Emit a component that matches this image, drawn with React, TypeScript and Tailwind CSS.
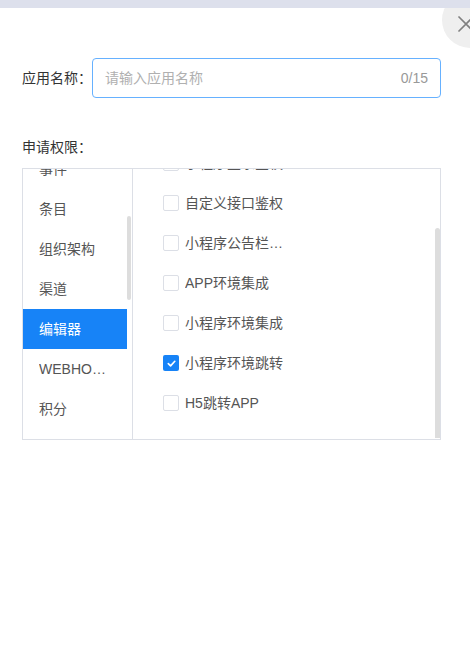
import React from "react";

const leftItems = ["事件", "条目", "组织架构", "渠道", "编辑器", "WEBHOOK", "积分"];
const rightItems: { label: string; checked: boolean }[] = [
  { label: "小程序登录鉴权", checked: false },
  { label: "自定义接口鉴权", checked: false },
  { label: "小程序公告栏配置", checked: false },
  { label: "APP环境集成", checked: false },
  { label: "小程序环境集成", checked: false },
  { label: "小程序环境跳转", checked: true },
  { label: "H5跳转APP", checked: false },
];

function Check({ checked }: { checked: boolean }) {
  if (checked) {
    return (
      <span className="flex h-[16px] w-[16px] shrink-0 items-center justify-center rounded-[2px] bg-[#1783f7]">
        <svg width="11" height="11" viewBox="0 0 12 12" fill="none">
          <path d="M2.5 6.2 L5 8.6 L9.6 3.6" stroke="#fff" strokeWidth="1.8" strokeLinecap="round" strokeLinejoin="round" />
        </svg>
      </span>
    );
  }
  return <span className="h-[16px] w-[16px] shrink-0 rounded-[2px] border border-[#dcdfe6] bg-white" />;
}

export default function App() {
  return (
    <div
      className="relative h-[653px] w-[470px] overflow-hidden bg-white text-[14px]"
      style={{ fontFamily: '"Liberation Sans", "Noto Sans CJK SC", sans-serif' }}
    >
      <div className="absolute left-[442px] top-[-8px] flex h-[56px] w-[56px] items-center justify-center rounded-full bg-[#efefef]">
        <svg className="-ml-[8px] mt-[8px]" width="18" height="18" viewBox="0 0 18 18" fill="none">
          <path d="M2 2 L16 16 M16 2 L2 16" stroke="#808080" strokeWidth="1.7" strokeLinecap="round" />
        </svg>
      </div>
      <div className="relative h-2 bg-[#dde0ec]" />

      <div className="pl-[22px] pr-[29px] pt-[50px]">
        <div className="flex items-center">
          <span className="w-[70px] shrink-0 text-[#333]">应用名称：</span>
          <div className="flex h-10 flex-1 items-center justify-between rounded-[4px] border border-[#66b1ff] px-3">
            <span className="text-[#b0b0b0]">请输入应用名称</span>
            <span className="text-[#999]">0/15</span>
          </div>
        </div>

        <div className="mt-[39px] leading-5 text-[#333]">申请权限：</div>

        <div className="mt-[11px] flex h-[272px] border border-[#dcdfe6]">
          <div className="relative w-[110px] shrink-0 overflow-hidden border-r border-[#dcdfe6]">
            <div className="-mt-[20px] w-[104px]">
              {leftItems.map((it) => (
                <div
                  key={it}
                  className={
                    "flex h-10 items-center pl-4 pr-4 " +
                    (it === "编辑器" ? "bg-[#1783f7] text-white" : "text-[#555]")
                  }
                >
                  <span className="truncate">{it}</span>
                </div>
              ))}
            </div>
            <div className="absolute left-[104px] top-[47px] h-[84px] w-[4px] rounded-full bg-[#dddddd]" />
          </div>

          <div className="relative flex-1 overflow-hidden">
            <div className="-mt-[26px]">
              {rightItems.map((it) => (
                <div key={it.label} className="flex h-10 items-center gap-[6px] pl-[30px] text-[#555]">
                  <Check checked={it.checked} />
                  <span className="max-w-[100px] truncate">{it.label}</span>
                </div>
              ))}
            </div>
            <div className="absolute right-0 top-[59px] h-[210px] w-[5px] rounded-t-full bg-[#dddddd]" />
          </div>
        </div>
      </div>
    </div>
  );
}
